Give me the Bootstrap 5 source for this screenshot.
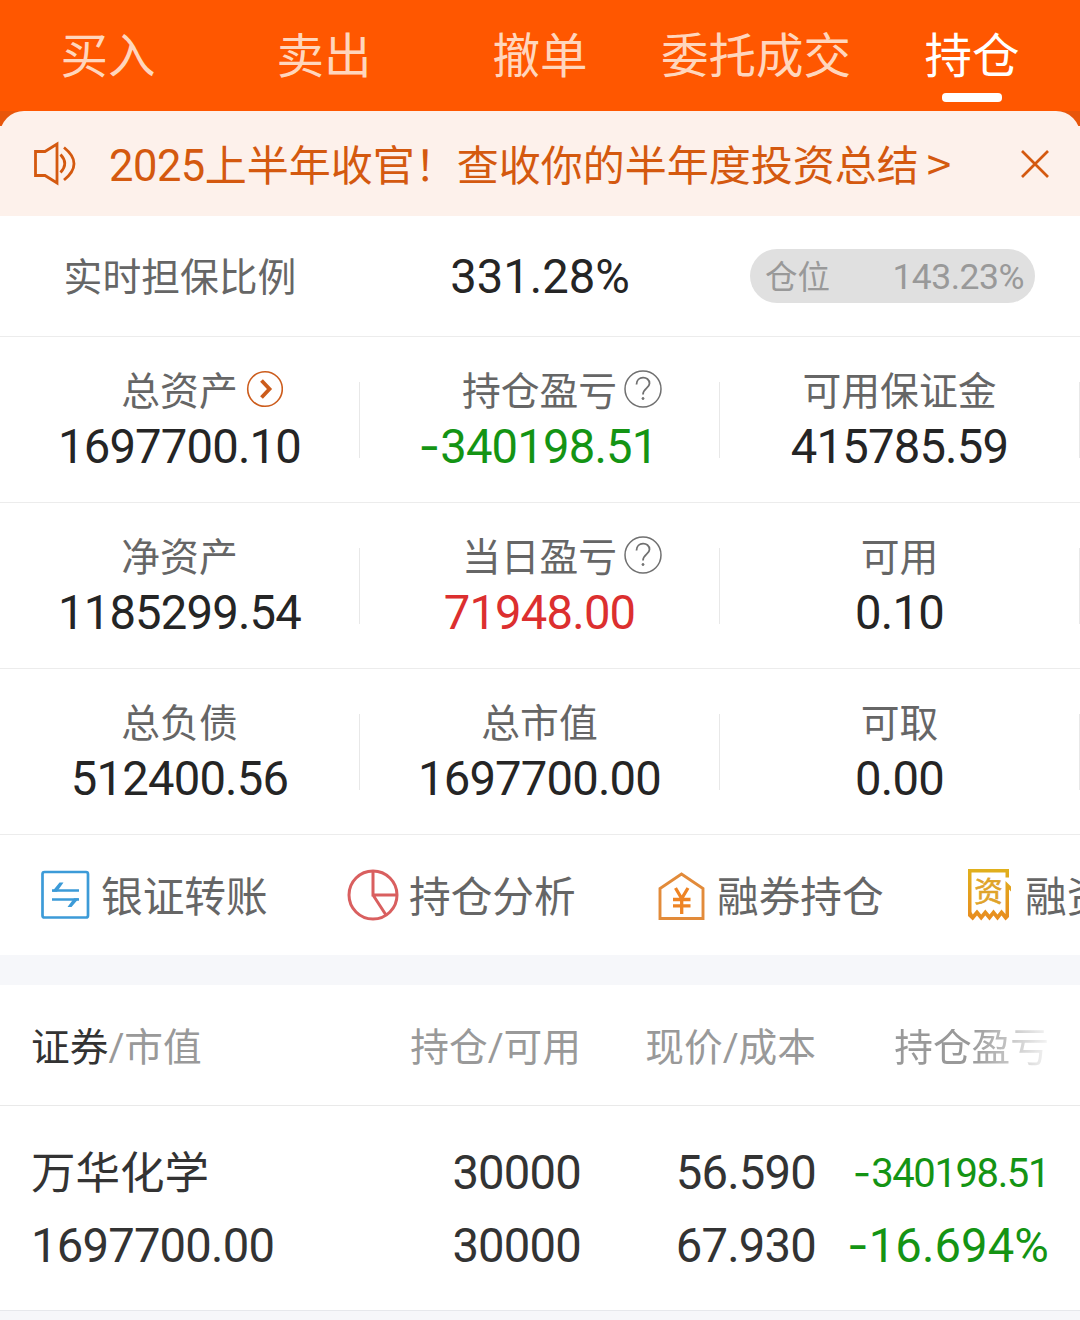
<!DOCTYPE html>
<html lang="zh-CN">
<head>
<meta charset="utf-8">
<meta name="viewport" content="width=device-width, initial-scale=1">
<title>持仓</title>
<link href="https://cdn.jsdelivr.net/npm/bootstrap@5.3.0/dist/css/bootstrap.min.css" rel="stylesheet">
<style>
body{font-family:Roboto,"Noto Sans CJK SC",sans-serif;background:#f6f7fa;color:#252525;width:1080px;height:1320px;overflow:hidden;line-height:1;}
svg{display:block;flex:none}
.tabs-bar{height:111px;background:#ff5700}
.tabs-bar .nav-link{flex:0 0 216px;height:111px;padding:0;font-size:47.5px;line-height:114px;color:#ffd6bd;position:relative}
.tabs-bar .nav-link.active{color:#fff}
.tabs-bar .nav-link.active::after{content:"";position:absolute;left:50%;bottom:9px;width:60px;height:9px;margin-left:-30px;border-radius:4px;background:#fff}
.notice-wrap{background:linear-gradient(#e8560a 15px,#fdf1eb 15px)}
.notice{height:105px;background:#fdf1eb;border-radius:24px 24px 0 0;color:#d4590f;padding:0 31px 0 33px;font-size:42px}
.notice-text{margin-left:32px;padding-top:2px}
.notice .yr{font-size:43.5px;letter-spacing:-.5px}
.notice .gt{padding-left:8px;font-family:"Noto Sans CJK SC",sans-serif;font-size:44px}
.margin-row{height:121px;border-bottom:1px solid #ececec}
.margin-row .num{letter-spacing:0;padding-top:2px}
.lbl{font-size:38.8px;color:#666;line-height:52px}
.num{font-size:47.2px;letter-spacing:-.8px;line-height:52px;white-space:nowrap}
.neg{font-family:Inter,sans-serif;letter-spacing:0;line-height:0}
.grn{color:#149414}.rd{color:#dc2f2f}
.pill{width:285px;height:54px;background:#e0e0e0;color:#999;font-size:32.5px;padding:0 11px 0 15px;margin-left:30px}
.pill span{padding-top:5px}
.pill b{font-weight:400;font-size:35.5px;letter-spacing:-.5px;padding-top:4px}
.stat-row{height:166px;border-bottom:1px solid #ececec}
.stat{padding-top:27px;position:relative}
.stat::after{content:"";position:absolute;right:0;top:45px;height:76px;width:1px;background:#e8e8e8}
.stat .lbl{padding-top:2px;padding-right:1px}
.stat svg{margin:-6px -45px 0 7px}
.stat .num{margin-top:3px;padding-right:1px}
.acts{height:120px;padding-left:39px;overflow:hidden}
.act{flex:0 0 308px;font-size:41.7px;color:#666;white-space:nowrap}
.act span{margin-left:10px;padding-top:6px}
.gap-band{height:30px;background:#f6f7fa}
.thead-row{height:121px;border-bottom:1px solid #e9e9e9;font-size:38.7px;color:#999;padding:6px 0 0 31px}
.hd-on{color:#333}
.hold{height:205px;border-bottom:1px solid #e6e8ec;padding:31px 0 0 31px;color:#333}
.hold .num{line-height:73px}
.c1{width:310px}.c2{width:240px;text-align:right}.c3{width:235px;text-align:right}.c4{width:233px;text-align:right;white-space:nowrap}
.fade-end{-webkit-mask-image:linear-gradient(90deg,#000 50%,rgba(0,0,0,.1) 100%);mask-image:linear-gradient(90deg,#000 50%,rgba(0,0,0,.1) 100%)}
.nm{font-size:44.5px;line-height:74px;height:73px}
.hold .sm-num{font-size:40px;letter-spacing:-1.4px}
.hold .pct{letter-spacing:.1px}
</style>
<script src="https://cdn.jsdelivr.net/npm/bootstrap@5.3.0/dist/js/bootstrap.bundle.min.js"></script>
</head>
<body>
<nav class="nav tabs-bar flex-nowrap text-center">
<a class="nav-link">买入</a><a class="nav-link">卖出</a><a class="nav-link">撤单</a><a class="nav-link">委托成交</a><a class="nav-link active">持仓</a>
</nav>
<div class="notice-wrap"><div class="notice d-flex align-items-center">
<svg width="44" height="46" viewBox="0 0 44 46" fill="none" stroke="#d4590f" stroke-width="2.800"><path d="M2.500 10.500H12L24 3V42L12 34.500H2.500Z"/><path d="M27.500 13.500Q36 22.500 27.500 31.500M31 6.500Q51 22.500 31 39"/></svg>
<div class="text-nowrap notice-text"><span class="yr">2025</span>上半年收官！查收你的半年度投资总结<span class="gt">&gt;</span></div>
<svg class="ms-auto" width="28" height="28" viewBox="0 0 28 28" stroke="#d4590f" stroke-width="2.700"><path d="M1 1L27 27M27 1L1 27"/></svg>
</div></div>
<main class="bg-white">
<div class="margin-row d-flex align-items-center">
<div class="col-4 text-center lbl pt-1">实时担保比例</div><div class="col-4 text-center num">331.28%</div>
<div class="pill rounded-pill d-flex align-items-center justify-content-between"><span>仓位</span><b>143.23%</b></div>
</div>
<div class="stat-row d-flex">
<div class="stat col-4"><div class="lbl d-flex justify-content-center align-items-center">总资产<svg width="38" height="38" viewBox="0 0 38 38" fill="none" stroke="#cc5c1c"><circle cx="20" cy="19" r="17.300" stroke-width="1.600"/><path d="M16.500 10.500L24.500 19L16.500 27.500" stroke-width="3.800"/></svg></div><div class="num text-center">1697700.10</div></div>
<div class="stat col-4"><div class="lbl d-flex justify-content-center align-items-center">持仓盈亏<svg width="38" height="38" viewBox="0 0 38 38" fill="none" stroke="#707070"><circle cx="19" cy="19" r="18" stroke-width="1.500"/><path d="M12.500 14.500C12.500 5.500 25.500 5.500 25.500 13.500C25.500 18 19 18.500 19 24.500" stroke-width="1.800"/><circle cx="19" cy="28.500" r="1" fill="#707070"/></svg></div><div class="num text-center grn pe-1"><span class="neg">-</span>340198.51</div></div>
<div class="stat col-4"><div class="lbl text-center">可用保证金</div><div class="num text-center">415785.59</div></div>
</div>
<div class="stat-row d-flex">
<div class="stat col-4"><div class="lbl text-center">净资产</div><div class="num text-center">1185299.54</div></div>
<div class="stat col-4"><div class="lbl d-flex justify-content-center align-items-center">当日盈亏<svg width="38" height="38" viewBox="0 0 38 38" fill="none" stroke="#707070"><circle cx="19" cy="19" r="18" stroke-width="1.500"/><path d="M12.500 14.500C12.500 5.500 25.500 5.500 25.500 13.500C25.500 18 19 18.500 19 24.500" stroke-width="1.800"/><circle cx="19" cy="28.500" r="1" fill="#707070"/></svg></div><div class="num text-center rd">71948.00</div></div>
<div class="stat col-4"><div class="lbl text-center">可用</div><div class="num text-center">0.10</div></div>
</div>
<div class="stat-row d-flex">
<div class="stat col-4"><div class="lbl text-center">总负债</div><div class="num text-center">512400.56</div></div>
<div class="stat col-4"><div class="lbl text-center">总市值</div><div class="num text-center">1697700.00</div></div>
<div class="stat col-4"><div class="lbl text-center">可取</div><div class="num text-center">0.00</div></div>
</div>
<div class="acts d-flex align-items-center">
<div class="act d-flex align-items-center"><svg width="52" height="52" viewBox="0 0 52 52" fill="none" stroke="#3c9bd8"><rect x="3.500" y="3" width="45.500" height="45.500" rx="2" stroke-width="2.700"/><path d="M13 21.500H40M13 30.500H40" stroke-width="2.500"/><path d="M13 22.700L20.500 13.500H24.500L18 22.700ZM40 29.300L32.500 38H28.500L35 29.300Z" fill="#3c9bd8" stroke="none"/></svg><span>银证转账</span></div>
<div class="act d-flex align-items-center"><svg width="52" height="52" viewBox="0 0 52 52" fill="none" stroke="#d95f5f" stroke-width="3"><circle cx="26" cy="26" r="24"/><path d="M26 2V26H50M26 26L39 46"/></svg><span>持仓分析</span></div>
<div class="act d-flex align-items-center"><svg width="52" height="52" viewBox="0 0 52 52" fill="none" stroke="#e28b3a" stroke-width="2.900"><path d="M5 49.500V19.500L26.500 5L48 19.500V49.500Z"/><path d="M20.500 19L26.700 29.500L33 19M26.700 29V45M18 30.500H35.500M18 36.800H35.500" stroke="#ee8424" stroke-width="3.300"/></svg><span>融券持仓</span></div>
<div class="act d-flex align-items-center"><svg width="52" height="52" viewBox="0 0 52 52" fill="none"><defs><linearGradient id="gold" x1="0" y1="0" x2="0" y2="1"><stop offset="0" stop-color="#e0b01c"/><stop offset="1" stop-color="#e88c20"/></linearGradient></defs><path fill="url(#gold)" d="M5 0H46V8.500H42.500V3.500H8.500V43L9.800 45.500L14 40.500L18.200 45.500L22.300 40.500L26.500 45.500L30.500 40.500L34.500 45.500L38.500 40.500L42.500 45V12L48 17.500V22.500L46 20.500V48L42.500 51.500L38.500 46.500L34.500 51.500L30.500 46.500L26.500 51.500L22.300 46.500L18.200 51.500L14 46.500L9.800 51.500L5 47Z"/><text x="25.500" y="33" font-size="28.500" text-anchor="middle" fill="#dfa32a" stroke="#dfa32a" stroke-width=".6" font-family="Noto Sans CJK SC">资</text></svg><span>融资持仓</span></div>
</div>
<div class="gap-band"></div>
<div class="thead-row d-flex align-items-center">
<div class="c1"><span class="hd-on">证券</span>/市值</div><div class="c2">持仓/可用</div><div class="c3">现价/成本</div><div class="c4"><span class="fade-end d-inline-block">持仓盈亏</span></div>
</div>
<div class="hold d-flex">
<div class="c1"><div class="nm">万华化学</div><div class="num">1697700.00</div></div>
<div class="c2 num">30000<br>30000</div>
<div class="c3 num">56.590<br>67.930</div>
<div class="c4 grn"><div class="num sm-num"><span class="neg">-</span>340198.51</div><div class="num pct"><span class="neg">-</span>16.694%</div></div>
</div>
</main>
</body>
</html>
